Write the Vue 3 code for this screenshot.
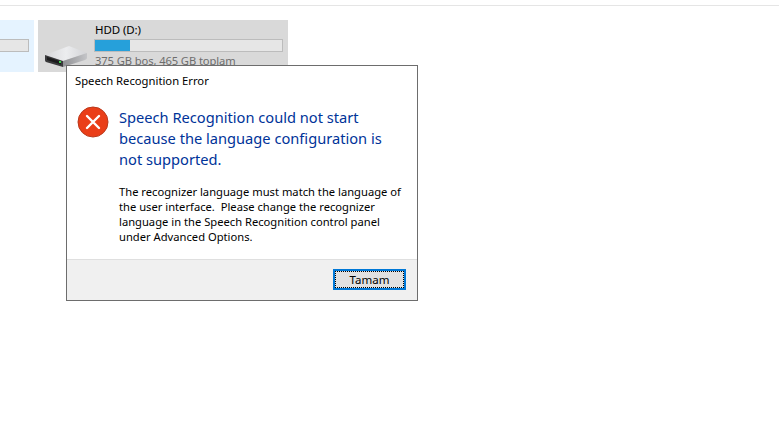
<script setup>
const bodyLines = [
  'The recognizer language must match the language of',
  'the user interface.  Please change the recognizer',
  'language in the Speech Recognition control panel',
  'under Advanced Options.'
]
const headLines = [
  'Speech Recognition could not start',
  'because the language configuration is',
  'not supported.'
]
</script>

<template>
  <div class="page">
    <div class="topline"></div>
    <div class="tiles">
      <div class="tile-left"><div class="stub"></div></div>
      <div class="tile">
        <svg class="drive" width="46" height="24" viewBox="0 0 46 24">
          <defs>
            <linearGradient id="topface" x1="0" y1="0.5" x2="1" y2="0.5">
              <stop offset="0" stop-color="#d6d6d9" />
              <stop offset="0.5" stop-color="#ecedef" />
              <stop offset="1" stop-color="#d2d3d6" />
            </linearGradient>
            <linearGradient id="sideface" x1="0" y1="0" x2="1" y2="0">
              <stop offset="0" stop-color="#8e8f92" />
              <stop offset="1" stop-color="#c4c5c8" />
            </linearGradient>
          </defs>
          <path d="M1 10 L25 1 L43 8 L19 16 Z" fill="url(#topface)" />
          <path d="M19 16 L43 8 L43 13 Q43 14 41 15 L19 22 Z" fill="url(#sideface)" />
          <path d="M1 10 L19 16 L19 22 L2 17 Q1 16.5 1 15 Z" fill="#3a3a3c" />
          <path d="M3 12 L17 16.5 L17 19.5 L3 15 Z" fill="#1b1b1c" />
          <rect x="15" y="16" width="2" height="2" fill="#3fd24f" />
        </svg>
        <div class="info">
          <div class="name">HDD (D:)</div>
          <div class="bar"><div class="fill"></div></div>
          <div class="size">375 GB boş, 465 GB toplam</div>
        </div>
      </div>
    </div>

    <div class="dialog">
      <div class="title">Speech Recognition Error</div>
      <div class="content">
        <svg class="err" width="32" height="32" viewBox="0 0 32 32">
          <circle cx="16" cy="16" r="15" fill="#ea3e18" stroke="#b9391c" stroke-width="1" />
          <path d="M10 10 L22 22 M22 10 L10 22" stroke="#fff" stroke-width="2.4" stroke-linecap="round" />
        </svg>
        <div class="texts">
          <div class="head"><div v-for="l in headLines" :key="l">{{ l }}</div></div>
          <div class="body"><div v-for="l in bodyLines" :key="l">{{ l }}</div></div>
        </div>
      </div>
      <div class="footer">
        <button class="ok"><span class="ok-inner">Tamam</span></button>
      </div>
    </div>
  </div>
</template>

<style>
html, body { background: #fff; }
</style>

<style scoped>
.page {
  position: relative;
  width: 779px;
  height: 441px;
  overflow: hidden;
  background: #fff;
  font-family: "Noto Sans", "Open Sans", sans-serif;
  color: #000;
}
.topline { height: 1px; margin-top: 5px; background: #e5e5e5; }
.tiles { display: flex; gap: 4px; margin-top: 14px; height: 52px; }
.tile-left { width: 34px; background: #e5f3ff; padding-top: 19px; box-sizing: border-box; }
.stub { width: 29px; height: 13px; background: #e6e6e6; border: 1px solid #bcbcbc; border-left: 0; box-sizing: border-box; }
.tile { width: 250px; background: #d9d9d9; display: flex; position: relative; }
.drive { margin: 25px 0 0 6px; flex: none; }
.info { margin-left: 4px; width: 189px; }
.name { font-size: 11.5px; line-height: 16px; margin: 2px 0 0 1px; letter-spacing: -0.1px; }
.bar { height: 13px; background: #e6e6e6; border: 1px solid #bcbcbc; box-sizing: border-box; margin-top: 1px; }
.fill { width: 35px; height: 11px; background: #26a0da; }
.size { font-size: 11.2px; line-height: 16px; color: #6d6d6d; margin: 1px 0 0 1px; letter-spacing: -0.1px; }
.dialog {
  position: absolute;
  left: 66px;
  top: 65px;
  width: 352px;
  height: 236px;
  box-sizing: border-box;
  border: 1px solid #6d6d6d;
  background: #fff;
  display: flex;
  flex-direction: column;
}
.title { font-size: 11.25px; line-height: 16px; margin: 7px 0 0 8px; }
.content { flex: 1; display: flex; padding: 18px 0 0 10px; }
.err { flex: none; margin-top: -1px; }
.texts { margin-left: 10px; }
.head { font-size: 14.65px; line-height: 21px; color: #003399; }
.body { font-size: 11.2px; line-height: 15px; margin-top: 14px; white-space: pre; }
.footer {
  height: 41px;
  box-sizing: border-box;
  background: #f0f0f0;
  border-top: 1px solid #dfdfdf;
  display: flex;
  justify-content: flex-end;
  padding: 9px 11px 0 0;
}
.ok {
  width: 73px;
  height: 21px;
  padding: 0;
  box-sizing: border-box;
  border: 2px solid #0078d7;
  background: #e1e1e1;
  font: inherit;
  font-size: 11.5px;
  color: #000;
}
.ok-inner {
  display: flex;
  align-items: center;
  justify-content: center;
  height: 100%;
  box-sizing: border-box;
  border: 1px dotted #000;
}
</style>
